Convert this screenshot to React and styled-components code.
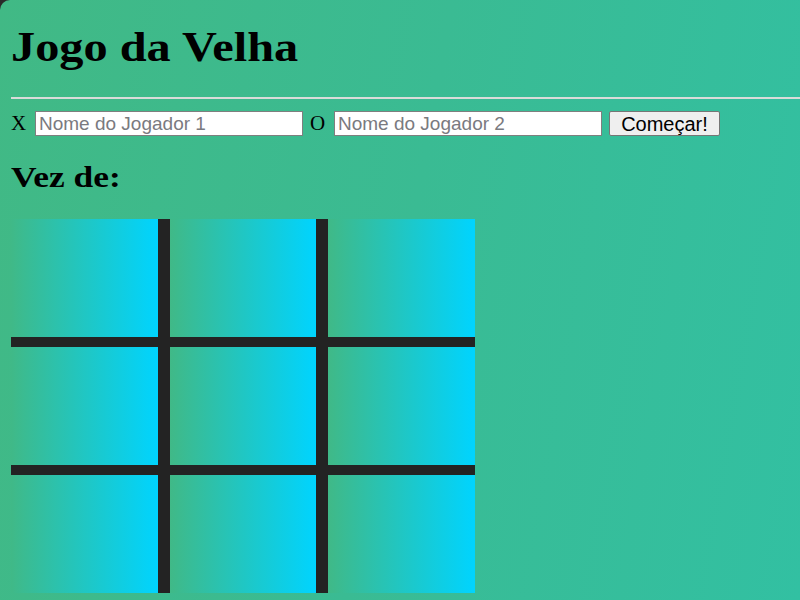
import React from "react";
import styled, { createGlobalStyle } from "styled-components";

const GlobalStyle = createGlobalStyle`
  html {
    background: #2a2a2a;
    height: 100%;
  }
  body {
    margin: 0;
    min-height: 100vh;
    overflow: hidden;
    border-top-left-radius: 10px;
    background: linear-gradient(100deg, #41b985 0%, #3abb93 50%, #32c0a2 100%);
    font-family: "Liberation Serif", "Times New Roman", serif;
    color: #000;
  }
`;

const Page = styled.main`
  display: flex;
  flex-direction: column;
  align-items: flex-start;
  padding-left: 11px;
`;

const Title = styled.h1`
  margin: 23px 0 0;
  font-size: 42px;
  font-weight: bold;
  line-height: 1.15;
  transform: scaleX(1.15);
  transform-origin: left center;
`;

const Divider = styled.hr`
  align-self: stretch;
  margin: 26px 0 0;
  height: 0;
  border: none;
  border-top: 2px solid #d9dcd9;
`;

const Controls = styled.div`
  display: flex;
  align-items: center;
  gap: 7px;
  margin-top: 12px;
`;

const Mark = styled.span`
  display: inline-block;
  width: 17px;
  font-size: 21px;
  line-height: 1;
`;

const NameInput = styled.input`
  box-sizing: border-box;
  width: 268px;
  height: 25px;
  padding: 0 3px;
  border: 1px solid #7f7f7f;
  background: #fff;
  font-family: "Liberation Sans", Arial, sans-serif;
  font-size: 19px;
  &::placeholder {
    color: #7a7a80;
  }
`;

const StartButton = styled.button`
  box-sizing: border-box;
  width: 111px;
  height: 25px;
  padding: 0;
  border: 1px solid #767676;
  border-radius: 2px;
  background: #efefef;
  font-family: "Liberation Sans", Arial, sans-serif;
  font-size: 20px;
  line-height: 1;
  color: #000;
`;

const Turn = styled.h2`
  margin: 24px 0 0;
  font-size: 30px;
  font-weight: bold;
  line-height: 1.15;
  transform: scaleX(1.18);
  transform-origin: left center;
`;

const Board = styled.div`
  display: grid;
  grid-template-columns: repeat(3, 146.5px);
  grid-template-rows: repeat(3, 118px);
  column-gap: 12px;
  row-gap: 10px;
  margin-top: 24px;
  background: #232323;
`;

const Cell = styled.div`
  background: linear-gradient(90deg, #40b987 0%, #00d4ff 100%);
`;

export default function App() {
  const cells = Array.from({ length: 9 }, (_, i) => i);
  return (
    <>
      <GlobalStyle />
      <Page>
        <Title>Jogo da Velha</Title>
        <Divider />
        <Controls>
          <Mark>X</Mark>
          <NameInput placeholder="Nome do Jogador 1" />
          <Mark>O</Mark>
          <NameInput placeholder="Nome do Jogador 2" />
          <StartButton>Começar!</StartButton>
        </Controls>
        <Turn>Vez de:</Turn>
        <Board>
          {cells.map((i) => (
            <Cell key={i} />
          ))}
        </Board>
      </Page>
    </>
  );
}
